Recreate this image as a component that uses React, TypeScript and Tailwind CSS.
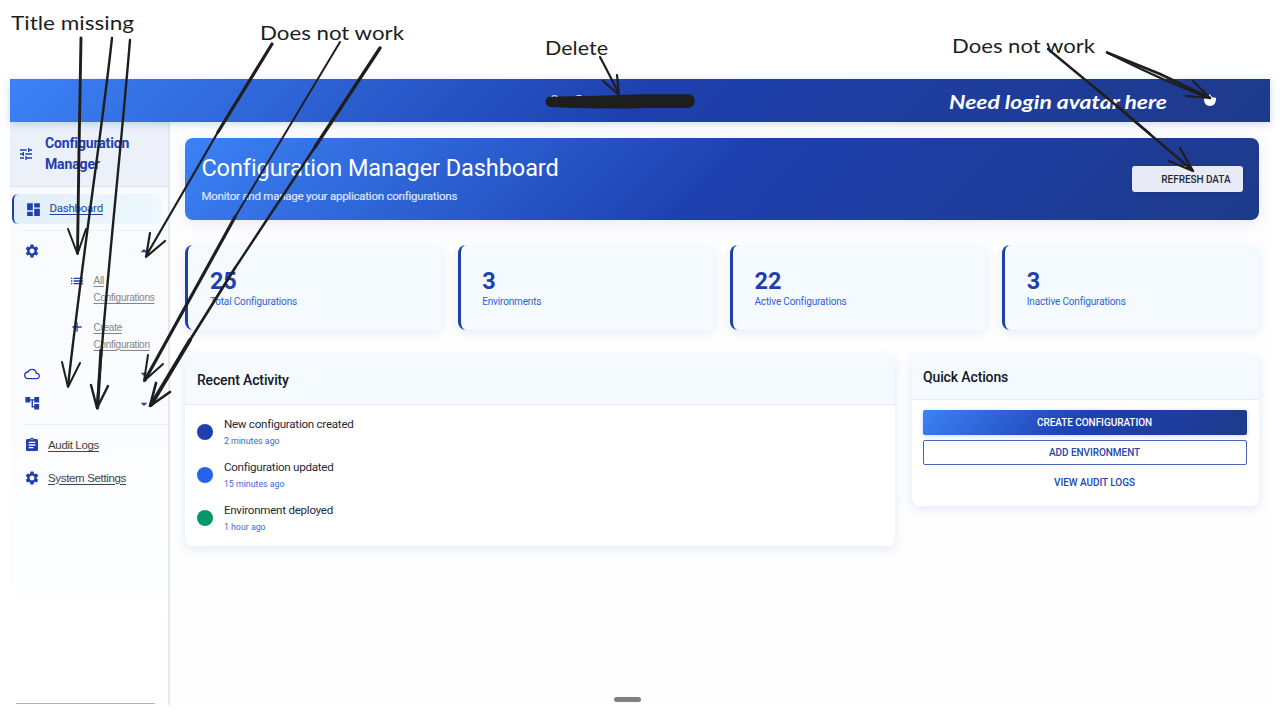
import type { ReactNode } from "react";
import {
  MdAccountTree,
  MdAdd,
  MdArrowDropDown,
  MdArrowDropUp,
  MdAssignment,
  MdCloudQueue,
  MdDashboard,
  MdList,
  MdSettings,
  MdTune,
} from "react-icons/md";

const stats = [
  { value: "25", label: "Total Configurations" },
  { value: "3", label: "Environments" },
  { value: "22", label: "Active Configurations" },
  { value: "3", label: "Inactive Configurations" },
];

const activity = [
  { title: "New configuration created", time: "2 minutes ago", dot: "bg-[#1e40af]" },
  { title: "Configuration updated", time: "15 minutes ago", dot: "bg-[#2563eb]" },
  { title: "Environment deployed", time: "1 hour ago", dot: "bg-[#059669]" },
];

function TopBar() {
  return (
    <header className="relative z-10 flex h-[43.500px] shrink-0 items-center justify-end bg-[linear-gradient(135deg,#3b82f6_0%,#1e40af_50%,#1e3a8a_100%)] pr-[54px] shadow-[0_2px_8px_rgba(30,64,175,0.2)]">
      <svg width="12" height="14" viewBox="0 0 12 14" className="-mt-px">
        <path d="M0 5.2C2.400 4.800 4 4 5 2.400L6 1l.7 1.600C7.700 4.200 9.600 5 12 4.800 12.300 9.500 10.200 13 6 13S-.3 9.500 0 5.200Z" fill="#fff" />
      </svg>
    </header>
  );
}

function GroupRow({ icon, open = false, className }: { icon: ReactNode; open?: boolean; className: string }) {
  return (
    <div className={"flex items-center justify-between pl-[13.500px] pr-[16px] text-[#1e40af] " + className}>
      {icon}
      {open ? <MdArrowDropUp size={16} /> : <MdArrowDropDown size={16} />}
    </div>
  );
}

function SubItem({ icon, first, second }: { icon: ReactNode; first: string; second: string }) {
  return (
    <a className="flex h-[46.500px] gap-[8.500px] pl-[59px] font-['Liberation_Sans',sans-serif] text-[10px] leading-[17px] tracking-[-0.250px] text-[#858585] underline underline-offset-2">
      <span className="flex h-[17px] w-4 shrink-0 items-center text-[#1e40af]">{icon}</span>
      <span>
        {first}
        <br />
        {second}
      </span>
    </a>
  );
}

function Sidebar() {
  return (
    <aside className="flex w-[160px] shrink-0 flex-col border-r-2 border-[#e4e7ee] bg-[linear-gradient(180deg,#f8fafc_0%,#fafcff_55%,#ffffff_90%)]">
      <div className="flex h-[65px] shrink-0 items-center gap-[11px] border-b border-[#dbe5f6] bg-[#ebf0f9] pl-2 text-[#1e40af]">
        <MdTune size={16} />
        <div className="text-[14px] font-bold leading-[21.500px] tracking-[-0.140px]">
          Configuration
          <br />
          Manager
        </div>
      </div>
      <a className="ml-[2px] mr-[6px] mt-[7px] flex h-[30px] shrink-0 items-center gap-[7.500px] rounded-md border-l-2 border-[#1e40af] bg-[linear-gradient(90deg,#e0eef9,#eff8fe)] pl-[11px] text-[11.500px] tracking-[-0.250px] text-[#1e40af] underline underline-offset-2">
        <MdDashboard size={17} />
        Dashboard
      </a>
      <div className="ml-[13px] mt-[6px] h-px shrink-0 bg-[#eceff4]" />
      <GroupRow icon={<MdSettings size={16} />} open className="mt-[9px] h-[22px]" />
      <div className="mt-[10px]">
        <SubItem icon={<MdList size={16} />} first="All" second="Configurations" />
        <SubItem icon={<MdAdd size={16} />} first="Create" second="Configuration" />
      </div>
      <GroupRow icon={<MdCloudQueue size={16} />} className="-mt-[1.500px] h-[21px]" />
      <GroupRow icon={<MdAccountTree size={16.5} />} className="mt-[9px] h-[20px]" />
      <div className="ml-[13px] mt-[10px] h-px shrink-0 bg-[#eceff4]" />
      <div className="mt-[9.500px] flex flex-col gap-[10.500px] pl-[13.500px] font-['Liberation_Sans',sans-serif] text-[11.500px] leading-[22px] tracking-[-0.340px] text-[#444] underline underline-offset-2">
        <a className="flex items-center gap-[8.500px]">
          <MdAssignment size={16} className="shrink-0 text-[#1e40af]" />
          Audit Logs
        </a>
        <a className="flex items-center gap-[8.500px]">
          <MdSettings size={16} className="shrink-0 text-[#1e40af]" />
          System Settings
        </a>
      </div>
      <div className="mb-px ml-[6px] mt-auto h-px w-[139px] bg-[#b5b5b5]" />
    </aside>
  );
}

function Hero() {
  return (
    <section className="flex h-[82px] items-center justify-between rounded-lg bg-[linear-gradient(135deg,#3b82f6_0%,#1e40af_50%,#1e3a8a_100%)] pl-4 pr-4 shadow-[0_4px_16px_rgba(30,64,175,0.10)]">
      <div className="pb-[2.500px]">
        <h1 className="text-[23.500px] leading-[34px] tracking-[-0.080px] text-white">Configuration Manager Dashboard</h1>
        <p className="mt-[2px] text-[11.500px] leading-[18px] tracking-[-0.230px] text-[#dbe6fb] [-webkit-text-stroke:0.2px_#dbe6fb]">
          Monitor and manage your application configurations
        </p>
      </div>
      <button className="flex h-[26px] w-[111px] items-center justify-end rounded-[3px] bg-[#e8ebf5] pr-3 text-[10px] font-medium tracking-[-0.050px] text-[#1f2937] shadow-sm">
        REFRESH DATA
      </button>
    </section>
  );
}

function StatCard({ value, label }: { value: string; label: string }) {
  return (
    <div className="h-[85px] rounded-lg border-l-[3px] border-[#1e40af] bg-[#f5faff] pl-[21.500px] pt-[23px] shadow-[0_3px_12px_rgba(30,64,175,0.10)]">
      <div className="text-[23.500px] font-bold leading-[26px] text-[#1e40af]">{value}</div>
      <div className="text-[10px] leading-[16px] tracking-[-0.160px] text-[#2f5fdb]">{label}</div>
    </div>
  );
}

function RecentActivity() {
  return (
    <section className="h-[191px] w-[710px] overflow-hidden rounded-lg bg-white shadow-[0_3px_12px_rgba(30,64,175,0.12)]">
      <h2 className="flex h-[50px] items-center border-b border-[#e4ecf5] bg-[#f5faff] pl-[11.500px] pt-px text-[14px] font-medium tracking-[-0.130px] text-[#111827]">
        Recent Activity
      </h2>
      <ul className="pt-[5px]">
        {activity.map((item) => (
          <li key={item.title} className="flex h-[43.200px] items-center gap-[11px] pl-[11.500px]">
            <span className={"mt-px size-4 rounded-full " + item.dot} />
            <div>
              <div className="text-[11.600px] leading-[18px] tracking-[-0.260px] text-[#1f2937]">{item.title}</div>
              <div className="text-[8.800px] leading-[16px] text-[#3b66dc]">{item.time}</div>
            </div>
          </li>
        ))}
      </ul>
    </section>
  );
}

function QuickActions() {
  return (
    <section className="h-[151px] w-[347px] overflow-hidden rounded-lg bg-white shadow-[0_3px_12px_rgba(30,64,175,0.12)]">
      <h2 className="flex h-[45px] items-center border-b border-[#e4ecf5] bg-[#f5faff] pl-[11.500px] pt-px text-[14px] font-medium tracking-[-0.130px] text-[#111827]">
        Quick Actions
      </h2>
      <div className="flex flex-col gap-[5px] px-[11.500px] pt-[10px] text-[10px] font-medium tracking-[-0.050px] text-[#2546b0]">
        <button className="h-[25px] rounded-[2px] bg-[linear-gradient(135deg,#3b82f6_0%,#1e40af_50%,#1e3a8a_100%)] pb-px pl-[19px] text-white shadow-[0_1px_5px_rgba(59,130,246,0.3)]">
          CREATE CONFIGURATION
        </button>
        <button className="h-[25px] rounded-[2px] border border-[#4764bd] pb-px pl-[19px]">ADD ENVIRONMENT</button>
        <button className="h-[25px] pb-px pl-[19px]">VIEW AUDIT LOGS</button>
      </div>
    </section>
  );
}

function Annotations() {
  return (
    <svg
      width="1280"
      height="714"
      viewBox="0 0 1280 714"
      className="pointer-events-none absolute left-0 top-0 z-20"
      fill="none"
      stroke="#1e1e1e"
      strokeLinecap="round"
      strokeLinejoin="round"
    >
      <g strokeWidth="2.4">
        <path d="M81 38 79 150 77.500 253" strokeWidth="2.900" />
        <path d="M68 229 77.500 254 86 229" strokeWidth="2" />
        <path d="M112 38C102 130 84 245 68 386" />
        <path d="M62 362 68 387 80 363" strokeWidth="2" />
        <path d="M130 40C121 150 106 285 97 408M91 385 97 408 108 386" />
        <path d="M101 350 97.500 408" strokeWidth="3.200" />
        <path d="M272 44 218 132" strokeWidth="3.200" />
        <path d="M218 132 146 256M150 233 146 257 165 241" strokeWidth="2.200" />
        <path d="M340 42 235 217" strokeWidth="2" />
        <path d="M235 217 145 380" strokeWidth="3.200" />
        <path d="M148 355 144 381 163 364" strokeWidth="2" />
        <path d="M380 48 315 147" strokeWidth="3.300" />
        <path d="M315 147 235 268" strokeWidth="2.400" />
        <path d="M235 268 180 356M156 383 150 406 170 392" strokeWidth="2.700" />
        <path d="M190 340 151 405" strokeWidth="3.800" />
        <path d="M600 57C607 70 613 82 619 94M603 81 619 95 617 75" strokeWidth="2.200" />
        <path d="M1048 49 1118 107 1192 170M1169 161 1193 171 1180 148" strokeWidth="2.400" />
        <path d="M1107 52.500 1160 74 1210 98" strokeWidth="2.700" />
        <path d="M1108 53C1144 71 1181 88 1210 98M1186 96 1210 98 1193 81" strokeWidth="2.100" />
      </g>
      <path d="M550.500 96.500Q600 96 640 94.200H689A7 7 0 0 1 689 108H645Q610 109.500 550 107A5.300 5.300 0 0 1 550.500 96.500Z" fill="#1e1e1e" stroke="none" />
      <path d="M552 96.400Q554.500 94.800 557 96.300M577 95.500H581" stroke="#c7d3f5" strokeWidth="1.100" />
      <g fontFamily="Lato, sans-serif" fontSize="19.5" fill="#1e1e1e" stroke="none">
        <text x="11" y="29.500" textLength="123" lengthAdjust="spacingAndGlyphs">Title missing</text>
        <text x="260" y="40" textLength="144" lengthAdjust="spacingAndGlyphs">Does not work</text>
        <text x="545" y="55" textLength="63" lengthAdjust="spacingAndGlyphs">Delete</text>
        <text x="952" y="53" textLength="143" lengthAdjust="spacingAndGlyphs">Does not work</text>
        <text x="949" y="109" textLength="218" lengthAdjust="spacingAndGlyphs" fill="#fff" fontWeight="700" fontStyle="italic">
          Need login avatar here
        </text>
      </g>
      <path d="M1100 92 1118 107 1150 134" strokeWidth="2.400" />
    </svg>
  );
}

export default function App() {
  return (
    <div className="relative flex h-[714px] w-[1280px] flex-col overflow-hidden bg-white px-[10px] pb-[9px] pt-[78.500px] font-[Roboto,sans-serif]">
      <TopBar />
      <div className="flex min-h-0 flex-1">
        <Sidebar />
        <main className="flex flex-1 flex-col bg-[#fefeff] pl-[15.400px] pr-[11.500px] pt-4">
          <Hero />
          <div className="mt-[25px] grid grid-cols-4 gap-4">
            {stats.map((stat) => (
              <StatCard key={stat.label} value={stat.value} label={stat.label} />
            ))}
          </div>
          <div className="mt-[25px] flex items-start justify-between">
            <RecentActivity />
            <QuickActions />
          </div>
          <div className="mb-[3px] ml-[428.500px] mt-auto h-[5px] w-[27px] rounded-full bg-[#808080]" />
        </main>
      </div>
      <Annotations />
    </div>
  );
}
